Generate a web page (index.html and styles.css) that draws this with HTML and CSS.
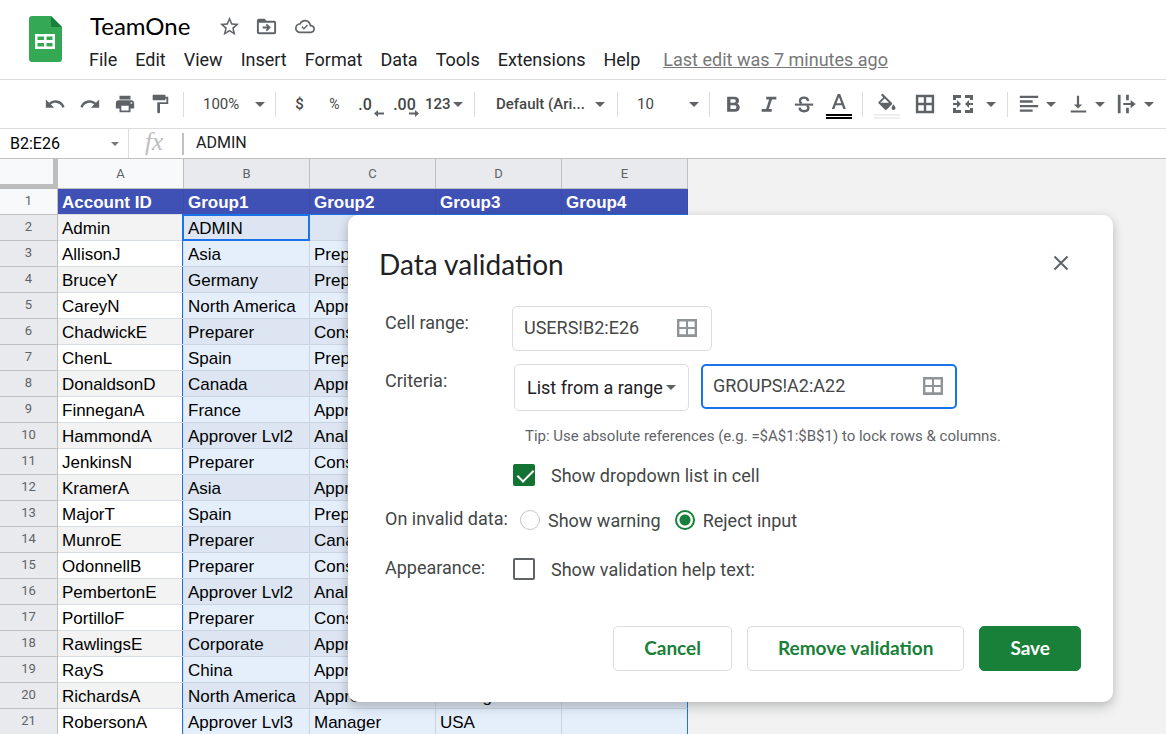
FILE: index.html
```html
<!DOCTYPE html>
<html lang="en">
<head>
<meta charset="utf-8">
<title>TeamOne</title>
<link rel="stylesheet" href="styles.css">
</head>
<body>
<header class="top">
  <svg class="logo" viewBox="0 0 33 46" aria-hidden="true">
    <path fill="#34a853" d="M3 0h19l11 11v32a3 3 0 0 1-3 3H3a3 3 0 0 1-3-3V3a3 3 0 0 1 3-3z"/>
    <path fill="#188038" d="M22 0l11 11H22z"/>
    <path fill="#fff" fill-rule="evenodd" d="M6 18h20v15H6zM8.500 20.500V24H15v-3.500zM17.500 20.500V24h6v-3.500zM8.500 27v3.500H15V27zM17.500 27v3.500h6V27z"/>
  </svg>
  <div class="top-main">
    <div class="title-row">
      <h1 class="doc-title">TeamOne</h1>
      <button class="plain" aria-label="Star"><svg class="icon" viewBox="0 0 24 24"><path d="M22 9.24l-7.19-.62L12 2 9.19 8.63 2 9.24l5.46 4.73L5.82 21 12 17.27 18.18 21l-1.63-7.03L22 9.24zM12 15.4l-3.76 2.27 1-4.28-3.32-2.88 4.38-.38L12 6.1l1.71 4.04 4.38.38-3.32 2.88 1 4.28L12 15.4z"/></svg></button>
      <button class="plain" aria-label="Move"><svg class="icon" viewBox="0 0 24 24"><path fill-rule="evenodd" d="M4 4h6l2 2h8a2 2 0 0 1 2 2v10a2 2 0 0 1-2 2H4a2 2 0 0 1-2-2V6a2 2 0 0 1 2-2zM4 8v10h16V8z"/><path d="M12.500 17l4-4-4-4-1.400 1.400 1.600 1.600H8v2h4.700l-1.600 1.600z"/></svg></button>
      <button class="plain" aria-label="Saved to Drive"><svg class="icon cloud" viewBox="0 0 24 24"><path d="M19.350 10.040C18.670 6.590 15.640 4 12 4 9.110 4 6.600 5.640 5.350 8.040 2.340 8.360 0 10.910 0 14c0 3.310 2.690 6 6 6h13c2.760 0 5-2.240 5-5 0-2.640-2.050-4.780-4.650-4.960zM19 18H6c-2.210 0-4-1.790-4-4 0-2.050 1.530-3.760 3.560-3.970l1.070-.11.5-.95C8.080 7.140 9.940 6 12 6c2.620 0 4.880 1.860 5.390 4.430l.3 1.500 1.530.11c1.560.1 2.780 1.410 2.780 2.960 0 1.650-1.350 3-3 3zm-8.300-4.600l-1.700-1.700-1.200 1.200 2.900 2.900 4.900-4.900-1.200-1.200z"/></svg></button>
    </div>
    <nav class="menu">
      <button class="plain">File</button><button class="plain">Edit</button><button class="plain">View</button><button class="plain">Insert</button><button class="plain">Format</button><button class="plain">Data</button><button class="plain">Tools</button><button class="plain">Extensions</button><button class="plain">Help</button>
      <a class="last-edit" href="#">Last edit was 7 minutes ago</a>
    </nav>
  </div>
</header>

<div class="toolbar" role="toolbar">
  <div class="group">
    <button class="tool" aria-label="Undo"><svg class="icon" viewBox="0 0 24 24"><path d="M12.500 8c-2.650 0-5.050.99-6.900 2.600L2 7v9h9l-3.620-3.620c1.390-1.160 3.160-1.880 5.120-1.880 3.540 0 6.550 2.310 7.600 5.500l2.370-.78C21.080 11.030 17.150 8 12.500 8z"/></svg></button>
    <button class="tool" aria-label="Redo"><svg class="icon" viewBox="0 0 24 24"><path d="M18.400 10.600C16.550 8.990 14.150 8 11.500 8c-4.650 0-8.580 3.030-9.960 7.220L3.900 16c1.050-3.190 4.050-5.500 7.600-5.500 1.950 0 3.730.72 5.120 1.880L13 16h9V7l-3.600 3.600z"/></svg></button>
    <button class="tool" aria-label="Print"><svg class="icon" viewBox="0 0 24 24"><path d="M19 8H5c-1.660 0-3 1.340-3 3v6h4v4h12v-4h4v-6c0-1.660-1.340-3-3-3zm-3 11H8v-5h8v5zm3-7c-.55 0-1-.45-1-1s.45-1 1-1 1 .45 1 1-.45 1-1 1zm-1-9H6v4h12V3z"/></svg></button>
    <button class="tool" aria-label="Paint format"><svg class="icon" viewBox="0 0 24 24"><path d="M18 4V3c0-.55-.45-1-1-1H5c-.55 0-1 .45-1 1v4c0 .55.45 1 1 1h12c.55 0 1-.45 1-1V6h1v4H9v11c0 .55.45 1 1 1h1c.55 0 1-.45 1-1v-9h9V4h-3z"/></svg></button>
  </div>
  <div class="group"><button class="drop zoom">100%<i class="caret"></i></button></div>
  <div class="group">
    <button class="tool">$</button>
    <button class="tool small">%</button>
    <button class="tool decimal fewer">.0<svg class="arrow" viewBox="0 0 10 7"><path d="M4 0v2.500h6v2H4V7L0 3.500z"/></svg></button>
    <button class="tool decimal">.00<svg class="arrow" viewBox="0 0 10 7"><path d="M6 0v2.500H0v2h6V7l4-3.500z"/></svg></button>
    <button class="drop number">123<i class="caret"></i></button>
  </div>
  <div class="group"><button class="drop font">Default (Ari...<i class="caret"></i></button></div>
  <div class="group"><button class="drop size">10<i class="caret"></i></button></div>
  <div class="group">
    <button class="tool" aria-label="Bold"><svg class="icon" viewBox="0 0 24 24"><path fill-rule="evenodd" d="M4.500 4h8c3 0 5 1.700 5 4.300 0 1.500-.8 2.800-2 3.500 1.800.7 2.800 2.100 2.800 4 0 2.900-2.200 4.700-5.300 4.700H4.500zM8.100 6.900v3.600H12c1.200 0 1.900-.7 1.900-1.800S13.200 6.900 12 6.900zM8.100 13.400v4.100h4.400c1.400 0 2.100-.8 2.100-2.050s-.7-2.050-2.100-2.050z"/></svg></button>
    <button class="tool" aria-label="Italic"><svg class="icon" viewBox="0 0 24 24"><path d="M9 4v3h3.200L8.800 17.500H4v3h11v-3h-3.200L15.200 7H20V4z"/></svg></button>
    <button class="tool" aria-label="Strikethrough"><svg class="icon" viewBox="0 0 24 24"><path d="M2 11.500h20v2.300H2z"/><path fill="none" stroke="#5f6368" stroke-width="2.600" d="M16.500 8.700C16.200 6.500 14.500 5.100 12 5.100c-2.600 0-4.400 1.400-4.400 3.500 0 1.200.6 2.100 1.800 2.900M15.300 13.900c1 .7 1.500 1.300 1.500 2.300 0 2.200-1.900 3.700-4.700 3.700s-4.700-1.400-5-3.900"/></svg></button>
    <button class="tool" aria-label="Text color"><svg class="icon color" viewBox="0 0 26 30"><path fill-rule="evenodd" d="M11.700 5h2.500l5.700 15h-2.600L16 16.300H9.700L8.400 20H5.800zM12.900 7.900l-2.400 6.300h4.800z"/><path fill="#000" d="M0 25h26v2H0zM0 28h26v2H0z"/></svg></button>
  </div>
  <div class="group fills">
    <button class="tool" aria-label="Fill color"><svg class="icon color" viewBox="0 0 26 30"><path fill-rule="evenodd" d="M8.500 4.500l9.300 9.300c.6.6.6 1.200 0 1.800l-5 5c-.7.6-1.300.6-2 0l-6-6c-.6-.6-.6-1.200 0-1.800l4.400-4.400L7 6zM10.600 9.400L6.300 13.800h8.700z"/><path d="M19.500 15.500s-2 2.200-2 3.500a2 2 0 0 0 4 0c0-1.300-2-3.500-2-3.500z"/><path fill="#efefef" d="M0 25h26v2H0zM0 28h26v2H0z"/></svg></button>
    <button class="tool" aria-label="Borders"><svg class="icon" viewBox="0 0 24 24"><path fill-rule="evenodd" d="M2 2h20v20H2zM4.700 4.700v6h6v-6zM13.300 4.700v6h6v-6zM4.700 13.300v6h6v-6zM13.300 13.300v6h6v-6z"/></svg></button>
    <button class="drop merge" aria-label="Merge"><svg class="icon wide" viewBox="0 0 24 20"><path d="M2 1h8v3H5v2H2zM14 1h8v5h-3V4h-5zM2 14h3v2h5v3H2zM19 14h3v5h-8v-3h5zM2 9h4V6l4 4-4 4v-3H2zM22 9h-4V6l-4 4 4 4v-3h4z"/></svg><i class="caret"></i></button>
  </div>
  <div class="group aligns">
    <button class="drop align" aria-label="Horizontal align"><svg class="icon" viewBox="0 0 24 24"><path d="M2 3h20v2.500H2zM2 8h14v2.500H2zM2 13h20v2.500H2zM2 18h14v2.500H2z"/></svg><i class="caret"></i></button>
    <button class="drop align" aria-label="Vertical align"><svg class="icon" viewBox="0 0 24 24"><path d="M16.500 12.500h-3.300V3h-2.400v9.500H7.500L12 17zM4 19v2.400h17V19z"/></svg><i class="caret"></i></button>
    <button class="drop align" aria-label="Text wrapping"><svg class="icon" viewBox="0 0 24 24"><path d="M2 2h3v20H2zM11 2h3v6h-3zM11 16h3v6h-3zM8 10.800h8V7.500l5.500 4.500-5.500 4.500v-3.300H8z"/></svg><i class="caret"></i></button>
  </div>
</div>

<div class="formula-bar">
  <button class="drop name-box">B2:E26<i class="caret small-caret"></i></button>
  <span class="fx">fx</span>
  <span class="formula">ADMIN</span>
</div>

<main class="sheet">
  <table class="grid">
    <colgroup><col class="col-num"><col><col><col><col><col></colgroup>
    <thead><tr><th class="corner"></th><th class="plain-head">A</th><th>B</th><th>C</th><th>D</th><th>E</th></tr></thead>
    <tbody>
      <tr class="names"><th>1</th><td>Account ID</td><td>Group1</td><td>Group2</td><td>Group3</td><td>Group4</td></tr>
      <tr><th>2</th><td>Admin</td><td class="active">ADMIN</td><td></td><td></td><td></td></tr>
      <tr><th>3</th><td>AllisonJ</td><td>Asia</td><td>Preparer</td><td></td><td></td></tr>
      <tr><th>4</th><td>BruceY</td><td>Germany</td><td>Preparer</td><td></td><td></td></tr>
      <tr><th>5</th><td>CareyN</td><td>North America</td><td>Approver</td><td></td><td></td></tr>
      <tr><th>6</th><td>ChadwickE</td><td>Preparer</td><td>Cons</td><td></td><td></td></tr>
      <tr><th>7</th><td>ChenL</td><td>Spain</td><td>Preparer</td><td></td><td></td></tr>
      <tr><th>8</th><td>DonaldsonD</td><td>Canada</td><td>Approver</td><td></td><td></td></tr>
      <tr><th>9</th><td>FinneganA</td><td>France</td><td>Approver</td><td></td><td></td></tr>
      <tr><th>10</th><td>HammondA</td><td>Approver Lvl2</td><td>Analyst</td><td></td><td></td></tr>
      <tr><th>11</th><td>JenkinsN</td><td>Preparer</td><td>Cons</td><td></td><td></td></tr>
      <tr><th>12</th><td>KramerA</td><td>Asia</td><td>Approver</td><td></td><td></td></tr>
      <tr><th>13</th><td>MajorT</td><td>Spain</td><td>Preparer</td><td></td><td></td></tr>
      <tr><th>14</th><td>MunroE</td><td>Preparer</td><td>Canada</td><td></td><td></td></tr>
      <tr><th>15</th><td>OdonnellB</td><td>Preparer</td><td>Cons</td><td></td><td></td></tr>
      <tr><th>16</th><td>PembertonE</td><td>Approver Lvl2</td><td>Analyst</td><td></td><td></td></tr>
      <tr><th>17</th><td>PortilloF</td><td>Preparer</td><td>Cons</td><td></td><td></td></tr>
      <tr><th>18</th><td>RawlingsE</td><td>Corporate</td><td>Approver</td><td></td><td></td></tr>
      <tr><th>19</th><td>RayS</td><td>China</td><td>Approver</td><td></td><td></td></tr>
      <tr><th>20</th><td>RichardsA</td><td>North America</td><td>Approver</td><td>Manager</td><td></td></tr>
      <tr><th>21</th><td>RobersonA</td><td>Approver Lvl3</td><td>Manager</td><td>USA</td><td></td></tr>
    </tbody>
  </table>
</main>

<form class="dialog" role="dialog" aria-labelledby="dialog-title">
  <div class="dialog-head">
    <h2 class="dialog-title" id="dialog-title">Data validation</h2>
    <button type="button" class="plain close" aria-label="Close"><svg class="close-icon" viewBox="0 0 16 16"><path d="M1.500 1.500l13 13M14.500 1.500l-13 13"/></svg></button>
  </div>
  <div class="fields">
    <label class="name" for="range">Cell range:</label>
    <div class="box range-box">
      <input class="text" id="range" value="USERS!B2:E26">
      <svg class="cells" viewBox="0 0 20 18"><path d="M0 0h20v18H0zM2.400 2.400V8H9V2.400zM11 2.400V8h6.600V2.400zM2.400 10v5.300H9V10zM11 10v5.300h6.600V10z"/></svg>
    </div>

    <label class="name" for="criteria">Criteria:</label>
    <div class="criteria">
      <div class="select-box">
        <select class="select" id="criteria"><option>List from a range</option></select>
        <i class="caret"></i>
      </div>
      <div class="box focus">
        <input class="text" aria-label="Source range" value="GROUPS!A2:A22">
        <svg class="cells" viewBox="0 0 20 18"><path d="M0 0h20v18H0zM2.400 2.400V8H9V2.400zM11 2.400V8h6.600V2.400zM2.400 10v5.300H9V10zM11 10v5.300h6.600V10z"/></svg>
      </div>
    </div>

    <p class="tip">Tip: Use absolute references (e.g. =$A$1:$B$1) to lock rows &amp; columns.</p>

    <label class="option show-list"><input type="checkbox" class="check" checked>Show dropdown list in cell</label>

    <span class="name invalid">On invalid data:</span>
    <div class="radios">
      <label class="radio-label"><input type="radio" class="radio" name="invalid">Show warning</label>
      <label class="radio-label"><input type="radio" class="radio" name="invalid" checked>Reject input</label>
    </div>

    <span class="name appearance">Appearance:</span>
    <label class="option help-text"><input type="checkbox" class="check">Show validation help text:</label>
  </div>
  <div class="actions">
    <button type="button" class="btn">Cancel</button>
    <button type="button" class="btn">Remove validation</button>
    <button type="submit" class="btn primary">Save</button>
  </div>
</form>
</body>
</html>
```
FILE: styles.css
```css
* { box-sizing: border-box; }

body {
  margin: 0;
  height: 100vh;
  overflow: hidden;
  display: flex;
  flex-direction: column;
  position: relative;
  background: #fff;
  color: #202124;
  font-family: Roboto, sans-serif;
  font-size: 18px;
}

button, input, select { font: inherit; color: inherit; }

.plain {
  border: 0;
  padding: 0;
  background: none;
  display: flex;
}

.icon { width: 24px; height: 24px; fill: #5f6368; display: block; }

/* Header */
.top {
  display: flex;
  gap: 27px;
  padding: 10px 29px 0;
  height: 80px;
  border-bottom: 1px solid #dadce0;
  flex: none;
}
.logo { width: 33px; height: 46px; margin-top: 6px; }
.title-row { display: flex; align-items: center; height: 32px; }
.title-row .plain { margin-right: 14px; }
.title-row .icon { width: 23px; height: 23px; }
.title-row .icon.cloud { width: 20px; margin-left: 3px; }
.doc-title {
  margin: 0 28px 0 1px;
  font: 400 24px/32px Lato, sans-serif;
  color: #000;
}
.menu { display: flex; gap: 18px; margin-top: 5px; line-height: 26px; white-space: nowrap; }
.last-edit { color: #777; margin-left: 5px; }

/* Toolbar */
.toolbar {
  display: flex;
  align-items: center;
  height: 49px;
  padding-left: 37px;
  border-bottom: 1px solid #dadce0;
  color: #444746;
  font-size: 15px;
  font-weight: 500;
  flex: none;
}
.group { display: flex; align-items: center; height: 25px; padding: 0 6px; }
.group:first-child { padding-left: 0; }
.group + .group { border-left: 1px solid #dadce0; }
.tool, .drop {
  display: flex;
  align-items: center;
  justify-content: center;
  border: 0;
  padding: 0;
  background: none;
  height: 34px;
  white-space: nowrap;
}
.tool { width: 35px; }
.drop { justify-content: space-between; }
.small { font-size: 14px; font-weight: 400; }
.caret {
  border: 5px solid transparent;
  border-top-color: #5f6368;
  border-bottom: 0;
}
.small-caret { border-width: 4px 4px 0; border-top-color: #777; }
.zoom { width: 79px; padding: 0 4px 0 13px; font-weight: 400; }
.decimal { position: relative; font-size: 16px; }
.fewer { padding-right: 9px; }
.arrow { position: absolute; right: 3px; bottom: 4px; width: 10px; height: 7px; fill: #5f6368; }
.number { width: 46px; padding: 0 5px 0 3px; }
.font { width: 130px; padding: 0 6px 0 15px; }
.size { width: 79px; padding: 0 4px 0 13px; font-weight: 400; }
.toolbar .icon { width: 22px; height: 22px; }
.toolbar .icon.color { width: 26px; height: 30px; }
.fills { gap: 3px; }
.merge { width: 56px; padding: 0 5px; }
.toolbar .icon.wide { width: 26px; height: 20px; }
.aligns { gap: 3px; }
.align { width: 46px; padding: 0 4px; }

/* Formula bar */
.formula-bar {
  display: flex;
  align-items: center;
  height: 30px;
  border-bottom: 1px solid #c0c0c0;
  font-size: 16px;
  color: #000;
  flex: none;
}
.name-box { width: 129px; height: 29px; padding: 0 9px 0 10px; border-right: 1px solid #dadce0; }
.fx {
  width: 55px;
  padding-left: 16px;
  border-right: 2px solid #c0c0c0;
  font: italic 25px/18px "Liberation Serif", serif;
  padding-bottom: 4px;
  color: #bdbdbd;
}
.formula { padding: 0 0 2px 12px; color: #202124; }

/* Sheet */
.sheet { flex: 1; min-height: 0; overflow: hidden; background: #f2f2f2; }
.grid {
  width: 688px;
  table-layout: fixed;
  border-spacing: 0;
  font: 17px/23px "Liberation Sans", Arial, sans-serif;
  color: #000;
}
.col-num { width: 58px; }
.grid th {
  padding: 0;
  font: 13px/22px Roboto, sans-serif;
  color: #5f6368;
  background: #e8eaed;
  border: solid #c0c0c0;
  border-width: 0 1px 1px 0;
}
.grid thead th { height: 30px; }
.grid tbody th { height: 26px; padding-bottom: 2px; }
.grid .plain-head, .grid .names th { background: #f8f9fa; }
.grid thead .corner { background: #f8f9fa; border: solid #bdbdbd; border-width: 0 5px 5px 0; }
.grid td {
  height: 26px;
  padding: 2px 4px 0;
  white-space: nowrap;
  background: #e5effc;
  border: solid #c9d3e1;
  border-width: 0 1px 1px 0;
}
.grid tr:nth-child(even) td { background: #dce5f1; }
.grid td:nth-child(2) {
  background: #fff;
  border-color: #d9dee6;
  box-shadow: inset -1px 0 #1a73e8;
}
.grid tr:nth-child(even) td:nth-child(2) { background: #f3f3f3; }
.grid td:last-child { border-right-color: #1a73e8; }
.grid tr.names td {
  background: #3f51b5;
  border-color: #3b4ca9;
  border-bottom-color: #1a73e8;
  box-shadow: none;
  color: #fff;
  font-weight: 700;
}
.grid tr.names td:nth-child(2) { border-bottom-color: #d9dee6; background: #3f51b5; }
.active { position: relative; }
.active::after {
  content: "";
  position: absolute;
  inset: -1px -1px -1px -2px;
  border: 2px solid #1a73e8;
}

/* Dialog */
.dialog {
  position: absolute;
  left: 348px;
  top: 215px;
  width: 765px;
  padding: 31px 32px 31px 31px;
  background: #fff;
  border-radius: 10px;
  box-shadow: 0 6px 12px rgba(60, 64, 67, .2), 0 1px 8px rgba(60, 64, 67, .15);
  color: #444746;
}
.dialog-head { display: flex; justify-content: space-between; align-items: center; height: 36px; }
.dialog-title { margin: 0; font: 400 28px/36px Lato, sans-serif; color: #202124; }
.close { padding: 0 12px 2px 0; }
.close-icon { width: 16px; height: 16px; fill: none; stroke: #5f6368; stroke-width: 2; }
.fields {
  display: grid;
  grid-template-columns: 127px 1fr;
  margin-top: 24px;
  padding-left: 6px;
  line-height: 24px;
}
.name { padding-top: 5px; white-space: nowrap; }
.box {
  display: flex;
  align-items: center;
  justify-content: space-between;
  height: 45px;
  padding: 0 14px 2px 11px;
  border: 1px solid #dadce0;
  border-radius: 5px;
}
.range-box { width: 200px; }
.text { border: 0; outline: 0; padding: 0; width: 140px; background: none; }
.cells { width: 20px; height: 18px; fill: #8f9499; fill-rule: evenodd; }
.criteria { display: flex; gap: 12px; margin: 13px 0 0 2px; }
.name[for="criteria"] { padding-top: 18px; }
.select-box {
  position: relative;
  width: 175px;
  height: 47px;
  border: 1px solid #dadce0;
  border-radius: 5px;
  color: #202124;
}
.select {
  appearance: none;
  width: 100%;
  height: 100%;
  padding: 0 0 0 12px;
  border: 0;
  background: none;
}
.select-box .caret { position: absolute; right: 12px; top: 20px; pointer-events: none; }
.focus { width: 256px; border: 2px solid #1a73e8; padding: 0 12px 2px 10px; }
.tip {
  grid-column: 2;
  margin: 13px 0 0;
  padding-left: 13px;
  font-size: 15px;
  color: #5f6368;
}
.option { grid-column: 2; display: flex; align-items: center; height: 24px; gap: 16px; padding-left: 1px; }
.show-list { margin-top: 16px; }
.check {
  appearance: none;
  flex: none;
  width: 22px;
  height: 22px;
  margin: 0 0 2px;
  border: 2px solid #5f6368;
  border-radius: 2px;
}
.check:checked {
  border-color: #137333;
  background: #137333;
  position: relative;
}
.check:checked::after {
  content: "";
  position: absolute;
  left: 6px;
  top: 0;
  width: 7px;
  height: 14px;
  border: solid #fff;
  border-width: 0 2px 2px 0;
  transform: rotate(45deg);
}
.invalid { padding-top: 19px; }
.radios { display: flex; gap: 14px; margin-top: 21px; padding-left: 8px; }
.radio-label { display: flex; align-items: center; gap: 8px; }
.radio {
  appearance: none;
  width: 20px;
  height: 20px;
  margin: 0 0 2px;
  border: 1px solid #c4c7c5;
  border-radius: 50%;
}
.radio:checked {
  border: 2px solid #188038;
  background: radial-gradient(circle, #188038 5px, transparent 6px);
}
.appearance { padding-top: 23px; }
.help-text { margin-top: 25px; }
.actions { display: flex; justify-content: flex-end; gap: 15px; margin-top: 44px; }
.btn {
  height: 45px;
  padding: 0 30px 2px;
  border: 1px solid #dadce0;
  border-radius: 5px;
  background: #fff;
  color: #188038;
  font: 700 19px Lato, sans-serif;
}
.primary { background: #188038; border-color: #188038; color: #fff; }
```
